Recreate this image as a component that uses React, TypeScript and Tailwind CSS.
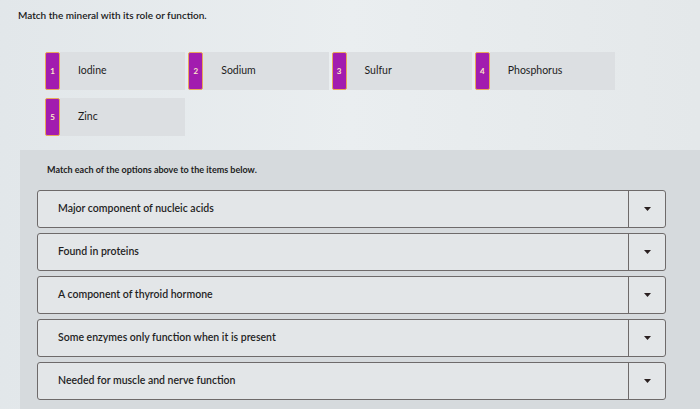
import React from 'react';

const minerals = [
    { n: 1, name: 'Iodine' },
    { n: 2, name: 'Sodium' },
    { n: 3, name: 'Sulfur' },
    { n: 4, name: 'Phosphorus' },
    { n: 5, name: 'Zinc' },
];

const items = [
    'Major component of nucleic acids',
    'Found in proteins',
    'A component of thyroid hormone',
    'Some enzymes only function when it is present',
    'Needed for muscle and nerve function',
];

const OptionCard: React.FC<{ n: number; name: string }> = ({ n, name }) => (
    <div className="flex h-[38px]">
        <div className="w-[15px] shrink-0 rounded-[2px] bg-[#a21caf] border border-[#e9a65a] flex items-center justify-center">
            <span className="text-[8px] font-bold text-[#fde9c8]">{n}</span>
        </div>
        <div className="flex-1 bg-[#dcdfe2] flex items-center pl-[18px]">
            <span className="text-[10.5px] text-[#1c1c1c]">{name}</span>
        </div>
    </div>
);

const MatchRow: React.FC<{ label: string }> = ({ label }) => (
    <div className="flex h-[38px] w-[629px] rounded-[3px] border border-[#6e6a6a] bg-[#e3e6e8]">
        <div className="flex-1 flex items-center pl-[20px]">
            <span className="text-[10.5px] font-semibold text-[#1f1f1f]">{label}</span>
        </div>
        <div className="w-[37px] border-l border-[#6e6a6a] flex items-center justify-center">
            <svg width="7" height="4" viewBox="0 0 7 4">
                <path d="M0 0h7L3.5 4z" fill="#2a2020" />
            </svg>
        </div>
    </div>
);

export default function App() {
    return (
        <div
            className="w-[700px] h-[409px] overflow-hidden bg-gradient-to-r from-[#e2e7ea] via-[#eaeef0] to-[#e4e8ea] text-[#1a1a1a]"
            style={{ fontFamily: 'Lato, "Open Sans", sans-serif' }}
        >
            <div className="pl-[18px] pt-[8px] text-[10px] font-semibold">Match the mineral with its role or function.</div>

            <div className="ml-[45px] mt-[29px] grid grid-cols-4 w-[570px] gap-x-[3px] gap-y-[8px]">
                {minerals.map(m => (
                    <OptionCard key={m.n} n={m.n} name={m.name} />
                ))}
            </div>

            <div className="ml-[20px] mt-[14px] h-[300px] bg-[#d6dadd] pt-[13px]">
                <div className="pl-[27px] text-[9px] font-bold text-[#222]">Match each of the options above to the items below.</div>
                <div className="ml-[17px] mt-[13px] flex flex-col gap-[5px]">
                    {items.map(it => (
                        <MatchRow key={it} label={it} />
                    ))}
                </div>
            </div>
        </div>
    );
}
